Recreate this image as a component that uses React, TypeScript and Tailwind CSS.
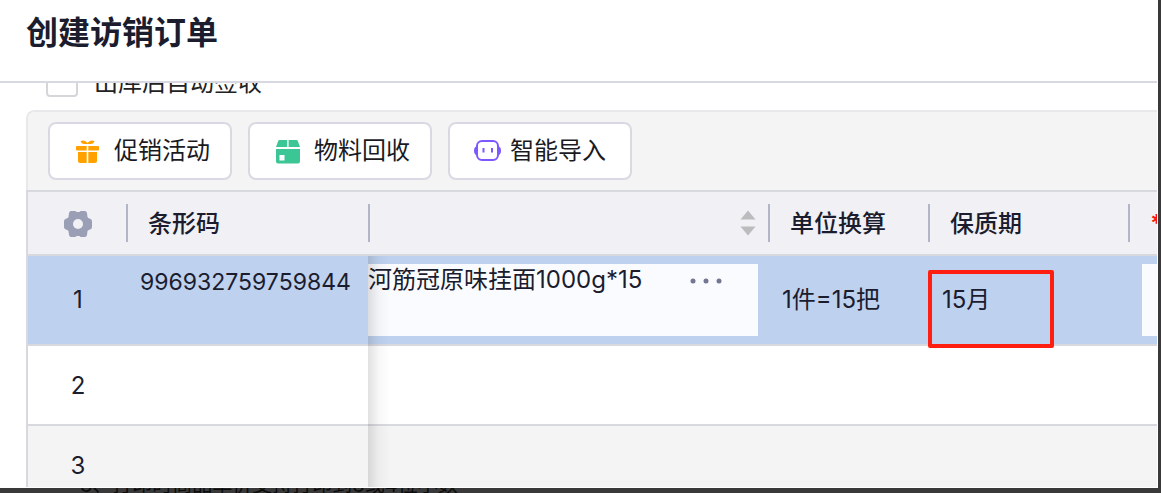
import type { ReactNode } from 'react';

type OrderLine = {
    id: number;
    barcode?: string;
    name?: string;
    conversion?: string;
    shelfLife?: string;
    active?: boolean;
}

const lines: OrderLine[] = [
    { id: 1, barcode: '996932759759844', name: '河筋冠原味挂面1000g*15', conversion: '1件=15把', shelfLife: '15月', active: true },
    { id: 2 },
    { id: 3 },
];

const GiftIcon = () => (
    <svg width="32" height="26" viewBox="-2 -2 32 26" fill="#ffa200" aria-hidden="true">
        <path d="M4.500 1.500Q6 .2 8.500 .8Q10.500 1.500 11.500 3Q12.500 1.500 14.500 .8Q17 .2 18.500 1.500Q17.500 4 14.500 4H8.500Q5.500 4 4.500 1.500Z" />
        <path d="M1 6H10.700V10.500H1A1 1 0 0 1 0 9.500V7A1 1 0 0 1 1 6ZM12.300 6H22A1 1 0 0 1 23 7V9.500A1 1 0 0 1 22 10.500H12.300Z" />
        <path d="M2 12H10.700V23H4A2 2 0 0 1 2 21ZM12.300 12H21V21A2 2 0 0 1 19 23H12.300Z" />
    </svg>
);

const BoxIcon = () => (
    <svg width="32" height="26" viewBox="-2 -2 32 26" fill="#3dc695" aria-hidden="true">
        <path d="M3.500 0H11.200V7H0L2.200 1A1.500 1.500 0 0 1 3.500 0ZM12.600 0H20.500A1.500 1.500 0 0 1 21.800 1L24 7H12.600Z" />
        <path fillRule="evenodd" d="M0 9H24V21.500A2 2 0 0 1 22 23.500H2A2 2 0 0 1 0 21.500ZM3.500 15V20.500H8.500V15Z" />
    </svg>
);

const RobotIcon = () => (
    <svg width="28" height="26" viewBox="0 -1 28 26" fill="none" aria-hidden="true">
        <path d="M3.500 7Q0 7.500 0 11.700T3.500 16.500ZM23.500 7Q27 7.500 27 11.700T23.500 16.500Z" fill="#7d57ff" />
        <rect x="3" y="2" width="21" height="19" rx="5" stroke="#7d57ff" strokeWidth="2" />
        <path d="M9.500 9V13.500M18 9V13.500" stroke="#7d57ff" strokeWidth="2" />
    </svg>
);

const GearIcon = () => (
    <svg width="28" height="28" viewBox="0 0 28 28" aria-hidden="true">
        <path
            fill="#9b9fb5"
            fillRule="evenodd"
            d="M7 1H11Q12 1 12.500 2H15.500Q16 1 17 1H21Q22.500 1 23 3L23.500 7Q24 8 25.500 8.500Q28 9 28 11V17Q28 19 26 19.500Q24 20 23.500 21L23 25Q22.500 27 21 27H17Q16 27 15.500 26H12.500Q12 27 11 27H7Q5.500 27 5 25L4.500 21Q4 20 2 19.500Q0 19 0 17V11Q0 9 2.500 8.500Q4 8 4.500 7L5 3Q5.500 1 7 1ZM14 9A5 5 0 1 0 14 19A5 5 0 1 0 14 9Z"
        />
    </svg>
);

const SortIcon = () => (
    <svg width="16" height="26" viewBox="0 0 16 26" fill="#bcbcbe" aria-hidden="true">
        <path d="M8 0.500L15.500 9.500H.5ZM8 25.500L15.500 16.500H.5Z" />
    </svg>
);

const DotsIcon = () => (
    <svg width="32" height="6" viewBox="0 0 32 6" fill="#737791" aria-hidden="true">
        <circle cx="3" cy="3" r="2.500" />
        <circle cx="16" cy="3" r="2.500" />
        <circle cx="29" cy="3" r="2.500" />
    </svg>
);

function ToolButton({ icon, children }: { icon: ReactNode; children: ReactNode }) {
    return (
        <button className="flex h-[58px] w-[184px] items-center gap-2 rounded-lg border-2 border-[#d9d9e3] bg-white pl-6">
            {icon}
            <span>{children}</span>
        </button>
    );
}

// header cell with the short divider on its right side
function HeadCell({ children, divider = true }: { children?: ReactNode; divider?: boolean }) {
    return (
        <th className="h-16 border-b-2 border-[#d8d8df] p-0 text-left font-medium">
            <div className={divider ? 'flex h-[38px] items-center border-r-2 border-[#b1b6c6] pt-0.5 pl-5' : 'flex h-[38px] items-center pt-0.5 pl-5'}>
                {children}
            </div>
        </th>
    );
}

function LineRow({ line }: { line: OrderLine }) {
    const rowColor = line.active ? 'bg-[#bed1ef]' : line.id % 2 ? 'bg-[#f4f4f4]' : 'bg-white';
    const cell = `border-b-2 border-[#d8d8df] ${line.active ? 'h-[90px] py-0' : 'h-20 pt-0.5 pb-0'}`;

    return (
        <tr className={rowColor}>
            <td className={`${cell} px-0 text-center`}>{line.id}</td>
            <td className={`${cell} relative pr-0 pl-3 align-top`}>
                <div className="pt-2 text-[23px] leading-9">{line.barcode}</div>
                <span className="pointer-events-none absolute top-0 -bottom-0.5 left-full z-10 w-[22px] bg-linear-to-r from-black/12 via-black/3 to-transparent"></span>
            </td>
            <td className={`${cell} pr-3 pl-0`}>
                {line.name && (
                    <div className="flex h-[72px] items-start bg-[#fafbff] pr-9">
                        <input
                            aria-label="商品名称"
                            defaultValue={line.name}
                            className="h-8 min-w-0 flex-1 bg-transparent leading-8 outline-none"
                        />
                        <button aria-label="更多" className="flex h-[34px] items-center">
                            <DotsIcon />
                        </button>
                    </div>
                )}
            </td>
            <td className={`${cell} pr-0 pl-3`}>{line.conversion}</td>
            <td className={`${cell} relative pr-0 pl-3`}>
                {line.shelfLife}
                {line.shelfLife && (
                    <span className="pointer-events-none absolute top-3.5 -left-0.5 z-20 h-[78px] w-[126px] rounded-xs border-4 border-[#ff1e0f]"></span>
                )}
            </td>
            <td className={`${cell} pr-0 pl-3`}>
                {line.active && <input aria-label="数量" className="block h-[72px] w-full bg-[#fafbff] outline-none" />}
            </td>
        </tr>
    );
}

export default function App() {
    return (
        <div className="flex h-screen flex-col overflow-hidden bg-[#393939] pr-[3px] font-['Inter','Noto_Sans_CJK_SC',sans-serif] text-2xl text-[#1b1c2e]">
            <main className="flex min-h-0 flex-1 flex-col bg-white pr-px pb-px">
                <header className="shrink-0 border-b-2 border-[#d8d8e2] px-[26px] pt-[9px] pb-6">
                    <h1 className="text-[32px] leading-[48px] font-bold">创建访销订单</h1>
                </header>

                <div className="min-h-0 flex-1 overflow-hidden pl-[26px]">
                    {/* scrolled partly under the header */}
                    <label className="-mt-[18px] mb-[13px] flex h-8 w-fit items-center gap-4 pl-5 text-[#222222]">
                        <input type="checkbox" className="size-8 appearance-none rounded border-2 border-[#d6d6da] bg-white" />
                        <span className="pt-1">出库后自动签收</span>
                    </label>

                    <section className="overflow-hidden rounded-tl-lg">
                        <div className="flex gap-4 rounded-tl-lg border-t-2 border-l-2 border-[#e8e8eb] bg-[#f4f4f4] px-5 py-2.5 text-[#1a1a1f]">
                            <ToolButton icon={<GiftIcon />}>促销活动</ToolButton>
                            <ToolButton icon={<BoxIcon />}>物料回收</ToolButton>
                            <ToolButton icon={<RobotIcon />}>智能导入</ToolButton>
                        </div>

                        <div className="overflow-hidden border-t-2 border-l-2 border-[#d8d8df]">
                            <table className="w-full min-w-[1300px] table-fixed border-separate border-spacing-0">
                                <colgroup>
                                    <col className="w-[100px]" />
                                    <col className="w-[240px]" />
                                    <col className="w-[402px]" />
                                    <col className="w-[160px]" />
                                    <col className="w-[200px]" />
                                    <col />
                                </colgroup>
                                <thead className="bg-[#f0f0f5]">
                                    <tr>
                                        <HeadCell>
                                            <button aria-label="设置" className="ml-4">
                                                <GearIcon />
                                            </button>
                                        </HeadCell>
                                        <HeadCell divider={false}>条形码</HeadCell>
                                        <th className="border-b-2 border-[#d8d8df] p-0">
                                            <div className="flex h-[38px] items-center justify-end border-x-2 border-[#b1b6c6] pr-3">
                                                <button aria-label="排序">
                                                    <SortIcon />
                                                </button>
                                            </div>
                                        </th>
                                        <HeadCell>单位换算</HeadCell>
                                        <HeadCell>保质期</HeadCell>
                                        <HeadCell divider={false}>
                                            <span className="font-bold text-[#ff1414]">*</span>
                                        </HeadCell>
                                    </tr>
                                </thead>
                                <tbody>
                                    {lines.map((line) => (
                                        <LineRow key={line.id} line={line} />
                                    ))}
                                </tbody>
                            </table>
                        </div>
                    </section>
                </div>
            </main>

            <footer className="flex h-[5px] shrink-0 items-end overflow-hidden pl-20 text-xl leading-4 text-[#0c0c0c]">
                <p className="whitespace-nowrap">3、打印时商品单价支持打印到3或4位小数</p>
            </footer>
        </div>
    );
}
